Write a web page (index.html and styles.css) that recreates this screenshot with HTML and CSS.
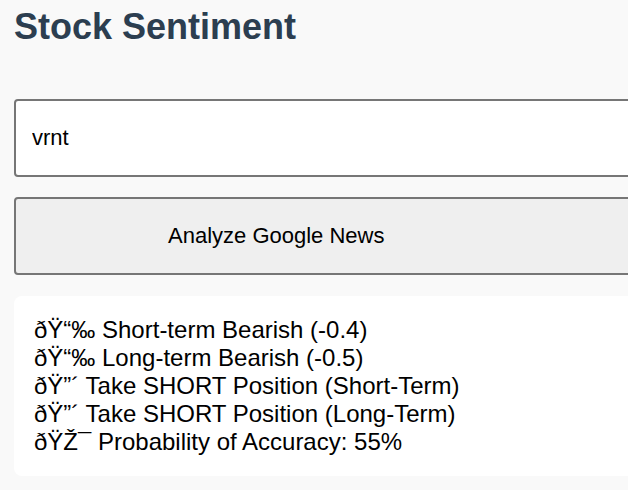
FILE: index.html
```html
<!DOCTYPE html>
<html lang="en">
<head>
  <meta charset="UTF-8" />
  <meta name="viewport" content="width=device-width, initial-scale=1" />
  <title>Stock Sentiment</title>
  <link rel="stylesheet" href="styles.css">
</head>
<body>
  <div class="app">
    <h1>Stock Sentiment</h1>

    <input id="ticker" class="ticker-input" type="text" value="vrnt" />
    <button class="analyze-btn" type="button">Analyze Google News</button>

    <div id="result" class="result">
      <div class="line">&#240;&#376;&#8220;&#8240; Short-term Bearish (-0.4)</div>
      <div class="line">&#240;&#376;&#8220;&#8240; Long-term Bearish (-0.5)</div>
      <div class="line">&#240;&#376;&#8221;&#180; Take SHORT Position (Short-Term)</div>
      <div class="line">&#240;&#376;&#8221;&#180; Take SHORT Position (Long-Term)</div>
      <div class="line">&#240;&#376;&#381;&#175; Probability of Accuracy: 55%</div>
    </div>
  </div>
</body>
</html>
```

FILE: styles.css
```css
body {
  font-family: 'Liberation Sans', Arial, sans-serif;
  background: #f9f9f9;
  color: #000;
  margin: 0;
  padding: 0 14px;
  overflow: hidden;
}

.app {
  width: 680px;
}

h1 {
  font-size: 36px;
  font-weight: bold;
  color: #2c3e50;
  margin: 6px 0 51px;
}

.ticker-input,
.analyze-btn {
  display: block;
  box-sizing: border-box;
  width: 100%;
  height: 78px;
  border: 2px solid #767676;
  border-radius: 4px;
  font-family: inherit;
  font-size: 22px;
  color: #000;
}

.ticker-input {
  background: #fff;
  padding: 0 16px;
  margin-bottom: 20px;
}

.analyze-btn {
  background: #efefef;
  text-align: left;
  padding: 0 0 0 152px;
  margin-bottom: 21px;
}

.result {
  background: #fff;
  border-radius: 8px;
  padding: 20px;
  font-size: 24px;
  line-height: normal;
}
```
